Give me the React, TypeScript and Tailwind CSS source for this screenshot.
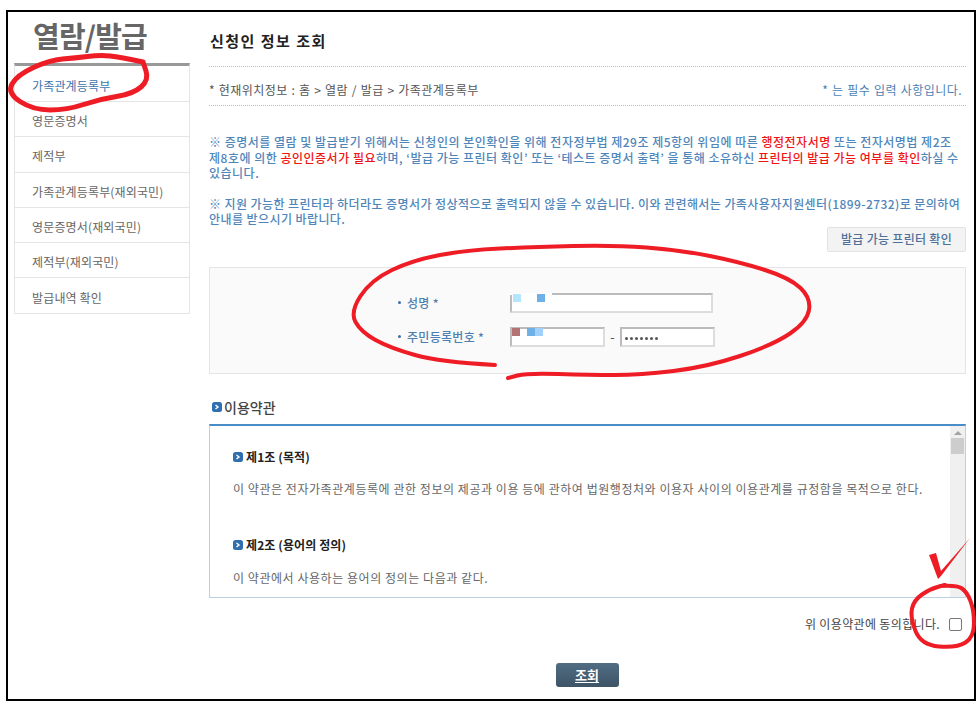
const menus = [
  "가족관계등록부",
  "영문증명서",
  "제적부",
  "가족관계등록부(재외국민)",
  "영문증명서(재외국민)",
  "제적부(재외국민)",
  "발급내역 확인",
];

function Bullet() {
  return (
    <svg width="10" height="10" viewBox="0 0 10 10" className="shrink-0">
      <rect x="0" y="0" width="10" height="10" rx="2.5" fill="#2f6fb0" />
      <path d="M3.5 3 L6 5 L3.5 7" stroke="#fff" strokeWidth="1.4" fill="none" />
    </svg>
  );
}

// smooth line through hand-picked points
function smooth(pts: number[][]) {
  let d = `M${pts[0][0]} ${pts[0][1]}`;
  for (let i = 1; i < pts.length - 1; i++) {
    const mx = (pts[i][0] + pts[i + 1][0]) / 2;
    const my = (pts[i][1] + pts[i + 1][1]) / 2;
    d += ` Q${pts[i][0]} ${pts[i][1]} ${mx} ${my}`;
  }
  const last = pts[pts.length - 1];
  return d + ` L${last[0]} ${last[1]}`;
}

const menuOval = [[143, 62], [120, 57], [100, 55], [75, 58], [50, 60], [17, 75], [7, 93], [33, 110], [67, 110], [100, 99], [133, 94], [149, 80], [143, 62]];
const formOval = [[495, 365], [440, 362], [390, 348], [361, 332], [350, 312], [371, 280], [413, 260], [467, 250], [533, 247], [613, 245], [680, 250], [740, 262], [790, 278], [811, 298], [807, 322], [773, 345], [707, 367], [640, 375], [590, 375], [527, 373], [508, 378]];
const boxOval = [[940, 586], [957, 585], [967, 592], [974, 610], [974, 637], [957, 648], [921, 645], [910, 617], [914, 600], [930, 589], [945, 585]];

function Scribbles() {
  return (
    <svg width="980" height="705" className="absolute left-0 top-0 pointer-events-none" fill="none" stroke="#ee1c25" strokeLinecap="round" strokeLinejoin="round">
      <path strokeWidth="5" d={smooth(menuOval)} />
      <path strokeWidth="4" d={smooth(formOval)} />
      <path strokeWidth="0" fill="#ee1c25" d="M929 555 L936 553 L941 571 L970 538 L941 576 L938 579 Z" />
      <path strokeWidth="4" d={smooth(boxOval)} />
    </svg>
  );
}

export default function App() {
  return (
    <div className="relative w-[980px] h-[705px] bg-white pt-[10px] pl-[6px] overflow-hidden font-['Noto_Sans_CJK_KR','Liberation_Sans',sans-serif]">
      <div className="w-[970px] h-[691px] border-2 border-black flex bg-white">
        {/* sidebar */}
        <div className="w-[176px] ml-[6px] shrink-0">
          <h1 className="h-[51px] pl-[19px] pt-px text-[29px] leading-[44px] font-bold text-[#666] tracking-[-0.8px]">열람/발급</h1>
          <ul className="border-t-[3px] border-[#999] border-x border-b border-x-[#e5e5e5] border-b-[#e5e5e5] pt-px">
            {menus.map((m, i) => (
              <li key={m} className={`h-[35.2px] pl-[17px] pt-[4px] flex items-center text-[12px] tracking-[0.15px] ${i === 0 ? "text-[#3b73ad]" : "text-[#666]"} ${i < menus.length - 1 ? "border-b border-[#e5e5e5]" : ""}`}>
                {m}
              </li>
            ))}
          </ul>
        </div>

        {/* main */}
        <div className="ml-[19px] w-[757px] shrink-0">
          <h2 className="h-[42px] pt-[17px] pl-px text-[15px] leading-[24px] font-bold text-[#222] tracking-[1.5px]">신청인 정보 조회</h2>
          <div className="mt-[12px] border-t border-dotted border-[#bbb] h-[39px] pt-[8px] flex items-center justify-between pr-[4px] text-[12px] tracking-[0.45px] [word-spacing:0.6px]">
            <span className="text-[#555]">* 현재위치정보 : 홈 &gt; 열람 / 발급 &gt; 가족관계등록부</span>
            <span className="text-[#4a7fb5]">* 는 필수 입력 사항입니다.</span>
          </div>
          <div className="border-t border-dotted border-[#bbb] pt-[28px] text-[12px] leading-[15.5px] font-medium text-[#4f86ba] break-keep">
            <p className="tracking-[0.5px]">
              ※ 증명서를 열람 및 발급받기 위해서는 신청인의 본인확인을 위해 전자정부법 제29조 제5항의 위임에 따른 <span className="text-[#f01515]">행정전자서명</span> 또는 전자서명법 제2조 제8호에 의한 <span className="text-[#f01515]">공인인증서가 필요</span>하며, ‘발급 가능 프린터 확인’ 또는 ‘테스트 증명서 출력’ 을 통해 소유하신 <span className="text-[#f01515]">프린터의 발급 가능 여부를 확인</span>하실 수 있습니다.
            </p>
            <p className="mt-[15px] tracking-[0.42px]">
              ※ 지원 가능한 프린터라 하더라도 증명서가 정상적으로 출력되지 않을 수 있습니다. 이와 관련해서는 가족사용자지원센터(1899-2732)로 문의하여 안내를 받으시기 바랍니다.
            </p>
          </div>
          <div className="flex justify-end">
            <button className="w-[139px] h-[25px] rounded-[2px] border border-[#e2e2e2] bg-[#f3f3f3] text-[12px] font-medium text-[#4f7199] tracking-[0.3px]">발급 가능 프린터 확인</button>
          </div>

          {/* form */}
          <div className="mt-[15px] h-[107px] border border-[#e5e5e5] bg-[#fafafa] pt-[25px] pl-[188px] text-[12px] font-medium text-[#4f7fb0] tracking-[0.3px]">
            <div className="flex items-center h-[20px]">
              <span className="w-[3px] h-[3px] rounded-full bg-[#3c6fa8] mr-[6px]" />
              <span className="w-[103px]">성명 *</span>
              <div className="relative w-[203px] h-[20px] border-2 border-[#ddd] border-t-[#bbb] border-l-[#bbb] bg-white">
                <span className="absolute -left-0.5 -top-0.5 w-[42px] h-[2px] bg-white" />
                <span className="absolute left-px top-[-1px] w-[8px] h-[8px] bg-[#b4e5fd]" />
                <span className="absolute left-[25px] top-[-1px] w-[8px] h-[8px] bg-[#6fb0e6]" />
              </div>
            </div>
            <div className="flex items-center h-[20px] mt-[14px]">
              <span className="w-[3px] h-[3px] rounded-full bg-[#3c6fa8] mr-[6px]" />
              <span className="w-[103px]">주민등록번호 *</span>
              <div className="relative w-[95px] h-[20px] border-2 border-[#ddd] border-t-[#bbb] border-l-[#bbb] bg-white">
                <span className="absolute left-0 top-[-1px] w-[8px] h-[8px] bg-[#b37373]" />
                <span className="absolute left-[15px] top-[-1px] w-[8px] h-[8px] bg-[#6fb0e6]" />
                <span className="absolute left-[23px] top-[-1px] w-[8px] h-[8px] bg-[#a0d0fb]" />
              </div>
              <span className="w-[15px] text-center text-[#555]">-</span>
              <div className="w-[95px] h-[20px] border-2 border-[#ddd] border-t-[#bbb] border-l-[#bbb] bg-white flex items-center pl-[3px] pt-[3px] gap-[2px]">
                {[0, 1, 2, 3, 4, 5, 6].map((d) => (
                  <span key={d} className="w-[3px] h-[3px] rounded-full bg-[#555]" />
                ))}
              </div>
            </div>
          </div>

          {/* terms */}
          <div className="mt-[21px] h-[29px] pb-[4px] flex items-center gap-[2px] pl-[3px] text-[14px] font-medium text-[#444]">
            <Bullet />
            <span>이용약관</span>
          </div>
          <div className="h-[174px] border border-[#bcd0e4] border-t-2 border-t-[#4a8cc8] flex overflow-hidden">
            <div className="flex-1 pl-[23px] pt-[21px] text-[12px] text-[#666]">
              <div className="flex items-center gap-[3px] h-[20px] font-bold text-[#222] tracking-[0.1px]">
                <Bullet />
                <span>제1조 (목적)</span>
              </div>
              <p className="mt-[12px] h-[20px] leading-[20px] tracking-[0.55px] whitespace-nowrap">이 약관은 전자가족관계등록에 관한 정보의 제공과 이용 등에 관하여 법원행정처와 이용자 사이의 이용관계를 규정함을 목적으로 한다.</p>
              <div className="flex items-center gap-[3px] h-[20px] mt-[36px] font-bold text-[#222] tracking-[0.1px]">
                <Bullet />
                <span>제2조 (용어의 정의)</span>
              </div>
              <p className="mt-[13px] h-[20px] leading-[20px] tracking-[0.55px]">이 약관에서 사용하는 용어의 정의는 다음과 같다.</p>
            </div>
            <div className="w-[15px] bg-[#f0f0f0] flex flex-col items-center pt-[5px]">
              <span className="w-0 h-0 border-x-[4px] border-x-transparent border-b-[4px] border-b-[#a3a3a3]" />
              <span className="mt-[3px] w-[13px] h-[16px] bg-[#cdcdcd]" />
            </div>
          </div>
          <div className="h-[50px] flex items-center justify-end gap-[9px] pr-[4px] pt-[3px] text-[12px] text-[#444] tracking-[0.35px]">
            <span>위 이용약관에 동의합니다.</span>
            <span className="w-[13px] h-[13px] rounded-[2px] border border-[#777] bg-white" />
          </div>
          <div className="flex justify-center mt-[15px] pr-[1px]">
            <button className="w-[63px] h-[24px] rounded-[3px] bg-gradient-to-b from-[#506d83] to-[#3e5467] text-[13px] font-bold text-white underline underline-offset-2">조회</button>
          </div>
        </div>
      </div>
      <Scribbles />
    </div>
  );
}
